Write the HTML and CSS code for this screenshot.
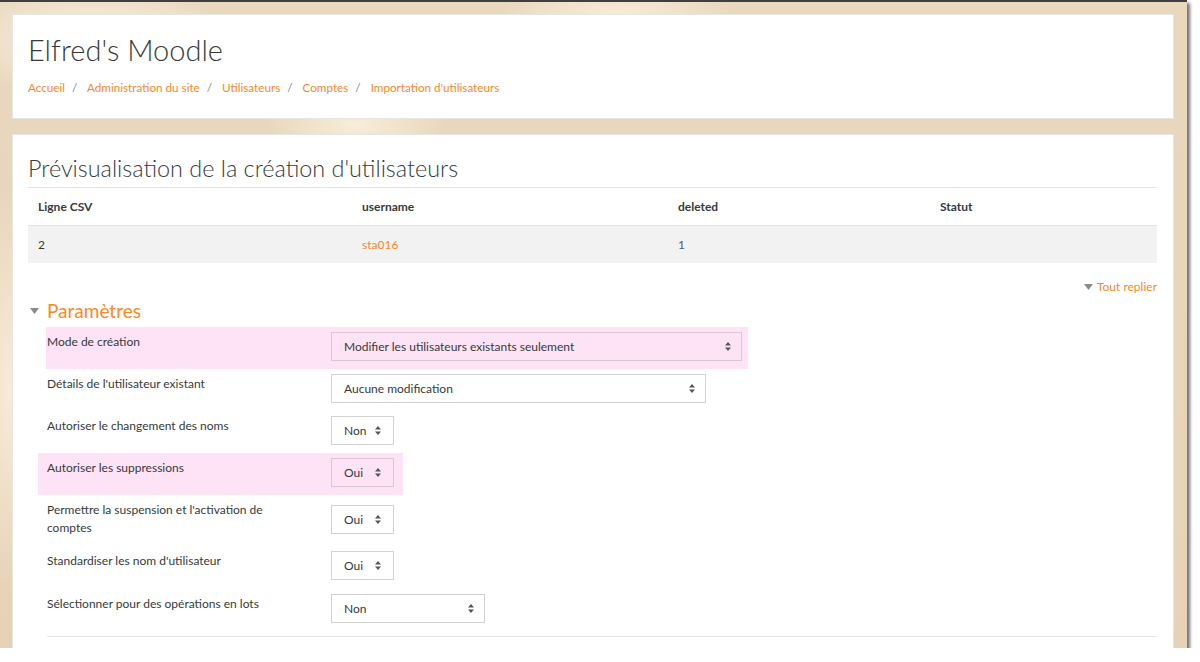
FILE: index.html
```html
<!DOCTYPE html>
<html lang="fr">
<head>
  <meta charset="UTF-8"/>
  <meta name="viewport" content="width=device-width, initial-scale=1.0"/>
  <title>Importation d'utilisateurs</title>
  <link rel="stylesheet" href="styles.css">
</head>
<body>
  <div class="frame">
    <div class="page">
      <header class="card page-header">
        <h1>Elfred's Moodle</h1>
        <nav class="breadcrumb">
          <a href="#">Accueil</a><span class="sep">/</span>
          <a href="#">Administration du site</a><span class="sep">/</span>
          <a href="#">Utilisateurs</a><span class="sep">/</span>
          <a href="#">Comptes</a><span class="sep">/</span>
          <a href="#">Importation d'utilisateurs</a>
        </nav>
      </header>

      <main class="card main">
        <h2>Prévisualisation de la création d'utilisateurs</h2>

        <table class="preview">
          <thead>
            <tr>
              <th class="c1">Ligne CSV</th>
              <th class="c2">username</th>
              <th class="c3">deleted</th>
              <th class="c4">Statut</th>
            </tr>
          </thead>
          <tbody>
            <tr>
              <td>2</td>
              <td><a href="#">sta016</a></td>
              <td class="num">1</td>
              <td></td>
            </tr>
          </tbody>
        </table>

        <div class="collapse-all">
          <svg class="caret" width="9" height="6" viewBox="0 0 9 6"><polygon points="0,0 9,0 4.5,6"/></svg>
          <a href="#">Tout replier</a>
        </div>

        <div class="legend">
          <svg class="caret" width="9" height="6" viewBox="0 0 9 6"><polygon points="0,0 9,0 4.5,6"/></svg>
          <span>Paramètres</span>
        </div>

        <div class="form-row hl hl-first">
          <label>Mode de création</label>
          <div class="select w-wide"><span>Modifier les utilisateurs existants seulement</span><svg width="6" height="9" viewBox="0 0 6 9"><polygon points="0,3.5 3,0 6,3.5"/><polygon points="0,5.5 3,9 6,5.5"/></svg></div>
        </div>
        <div class="form-row">
          <label>Détails de l'utilisateur existant</label>
          <div class="select w-mid"><span>Aucune modification</span><svg width="6" height="9" viewBox="0 0 6 9"><polygon points="0,3.5 3,0 6,3.5"/><polygon points="0,5.5 3,9 6,5.5"/></svg></div>
        </div>
        <div class="form-row">
          <label>Autoriser le changement des noms</label>
          <div class="select w-sm"><span>Non</span><svg width="6" height="9" viewBox="0 0 6 9"><polygon points="0,3.5 3,0 6,3.5"/><polygon points="0,5.5 3,9 6,5.5"/></svg></div>
        </div>
        <div class="form-row hl">
          <label>Autoriser les suppressions</label>
          <div class="select w-sm"><span>Oui</span><svg width="6" height="9" viewBox="0 0 6 9"><polygon points="0,3.5 3,0 6,3.5"/><polygon points="0,5.5 3,9 6,5.5"/></svg></div>
        </div>
        <div class="form-row two-lines">
          <label>Permettre la suspension et l'activation de comptes</label>
          <div class="select w-sm"><span>Oui</span><svg width="6" height="9" viewBox="0 0 6 9"><polygon points="0,3.5 3,0 6,3.5"/><polygon points="0,5.5 3,9 6,5.5"/></svg></div>
        </div>
        <div class="form-row">
          <label>Standardiser les nom d'utilisateur</label>
          <div class="select w-sm"><span>Oui</span><svg width="6" height="9" viewBox="0 0 6 9"><polygon points="0,3.5 3,0 6,3.5"/><polygon points="0,5.5 3,9 6,5.5"/></svg></div>
        </div>
        <div class="form-row last">
          <label>Sélectionner pour des opérations en lots</label>
          <div class="select w-lots"><span>Non</span><svg width="6" height="9" viewBox="0 0 6 9"><polygon points="0,3.5 3,0 6,3.5"/><polygon points="0,5.5 3,9 6,5.5"/></svg></div>
        </div>

        <hr class="form-end">
      </main>
    </div>
  </div>
</body>
</html>
```

FILE: styles.css
```css
:root {
  --orange: #f7892a;
  --text: #373a3c;
  --line: #e3e3e3;
  --pink: #fde3f5;
}
body {
  margin: 0;
  background: #fff;
  font-family: Lato, "Open Sans", sans-serif;
  color: var(--text);
}
.frame {
  width: 1187px;
  height: 646px;
  overflow: hidden;
  border-top: 2px solid #3f3f3f;
  background:
    radial-gradient(ellipse 140px 60px at 8% 6%, rgba(255, 250, 238, .8), transparent),
    radial-gradient(ellipse 120px 50px at 52% 3%, rgba(255, 248, 232, .7), transparent),
    radial-gradient(ellipse 90px 40px at 30% 19%, rgba(255, 247, 230, .7), transparent),
    radial-gradient(ellipse 60px 200px at 1% 60%, rgba(255, 246, 228, .7), transparent),
    linear-gradient(#e9d8be, #e6d3b7);
  box-shadow: 3px 3px 3px rgba(0, 0, 0, .55);
}
.page {
  padding: 12px 13px 0 12px;
}
.card {
  background: #fff;
  border: 1px solid rgba(0, 0, 0, .1);
}
.page-header {
  box-sizing: border-box;
  height: 105px;
  padding: 17px 16px 0 15px;
}
h1 {
  margin: 0;
  font-size: 29px;
  line-height: 36px;
  font-weight: 300;
}
.breadcrumb {
  margin-top: 10px;
  font-size: 11.7px;
  line-height: 18px;
}
a {
  color: var(--orange);
  text-decoration: none;
}
.sep {
  color: #818a91;
  margin: 0 7px;
}
.main {
  margin-top: 15px;
  height: 560px;
  padding: 19px 16px 0 15px;
}
h2 {
  margin: 0;
  padding-bottom: 5px;
  border-bottom: 1px solid var(--line);
  font-size: 23.4px;
  line-height: 28px;
  font-weight: 300;
}
.preview {
  width: 100%;
  border-collapse: collapse;
  font-size: 12px;
}
.preview th,
.preview td {
  text-align: left;
  padding: 0 10px;
  height: 37px;
}
.preview th {
  font-weight: 700;
  border-bottom: 1px solid var(--line);
}
.preview tbody tr {
  background: #f2f2f2;
}
.preview .c1 { width: 304px; }
.preview .c2 { width: 296px; }
.preview .c3 { width: 242px; }
.num {
  color: #4f5d7a;
}
.caret {
  fill: #8a8a8a;
}
.collapse-all {
  margin-top: 15px;
  display: flex;
  justify-content: flex-end;
  align-items: center;
  gap: 4px;
  font-size: 12px;
  line-height: 18px;
}
.legend {
  margin-top: 3px;
  display: flex;
  align-items: center;
  gap: 8px;
  padding-left: 2px;
  font-size: 19px;
  line-height: 24px;
  color: var(--orange);
}
.form-row {
  display: flex;
  align-items: flex-start;
  width: fit-content;
  margin-left: 10px;
  padding: 5px 9px 8px 9px;
  font-size: 12px;
}
.legend + .form-row {
  margin-top: 4px;
}
.form-row label {
  width: 284px;
  padding-top: 1px;
  line-height: 18px;
}
.hl {
  background: var(--pink);
}
.hl-first {
  margin-left: 18px;
  padding-left: 1px;
  padding-right: 6px;
}
.two-lines {
  padding-bottom: 9px;
}
.two-lines label {
  width: 232px;
  margin-right: 52px;
}
.two-lines .select {
  margin-top: 5px;
}
.last {
  margin-top: 1px;
}
.select {
  box-sizing: border-box;
  height: 29px;
  display: flex;
  align-items: center;
  justify-content: space-between;
  padding: 0 10px 0 12px;
  border: 1px solid #d3d3d3;
  background: #fff;
}
.hl .select {
  background: transparent;
  border-color: #d8c8d2;
}
.select svg {
  fill: #555;
}
.w-wide { width: 411px; }
.w-mid { width: 375px; }
.w-sm { width: 63px; padding-right: 12px; }
.w-lots { width: 154px; }
.form-end {
  margin: 5px 0 0 19px;
  border: 0;
  border-top: 1px solid var(--line);
}
```
